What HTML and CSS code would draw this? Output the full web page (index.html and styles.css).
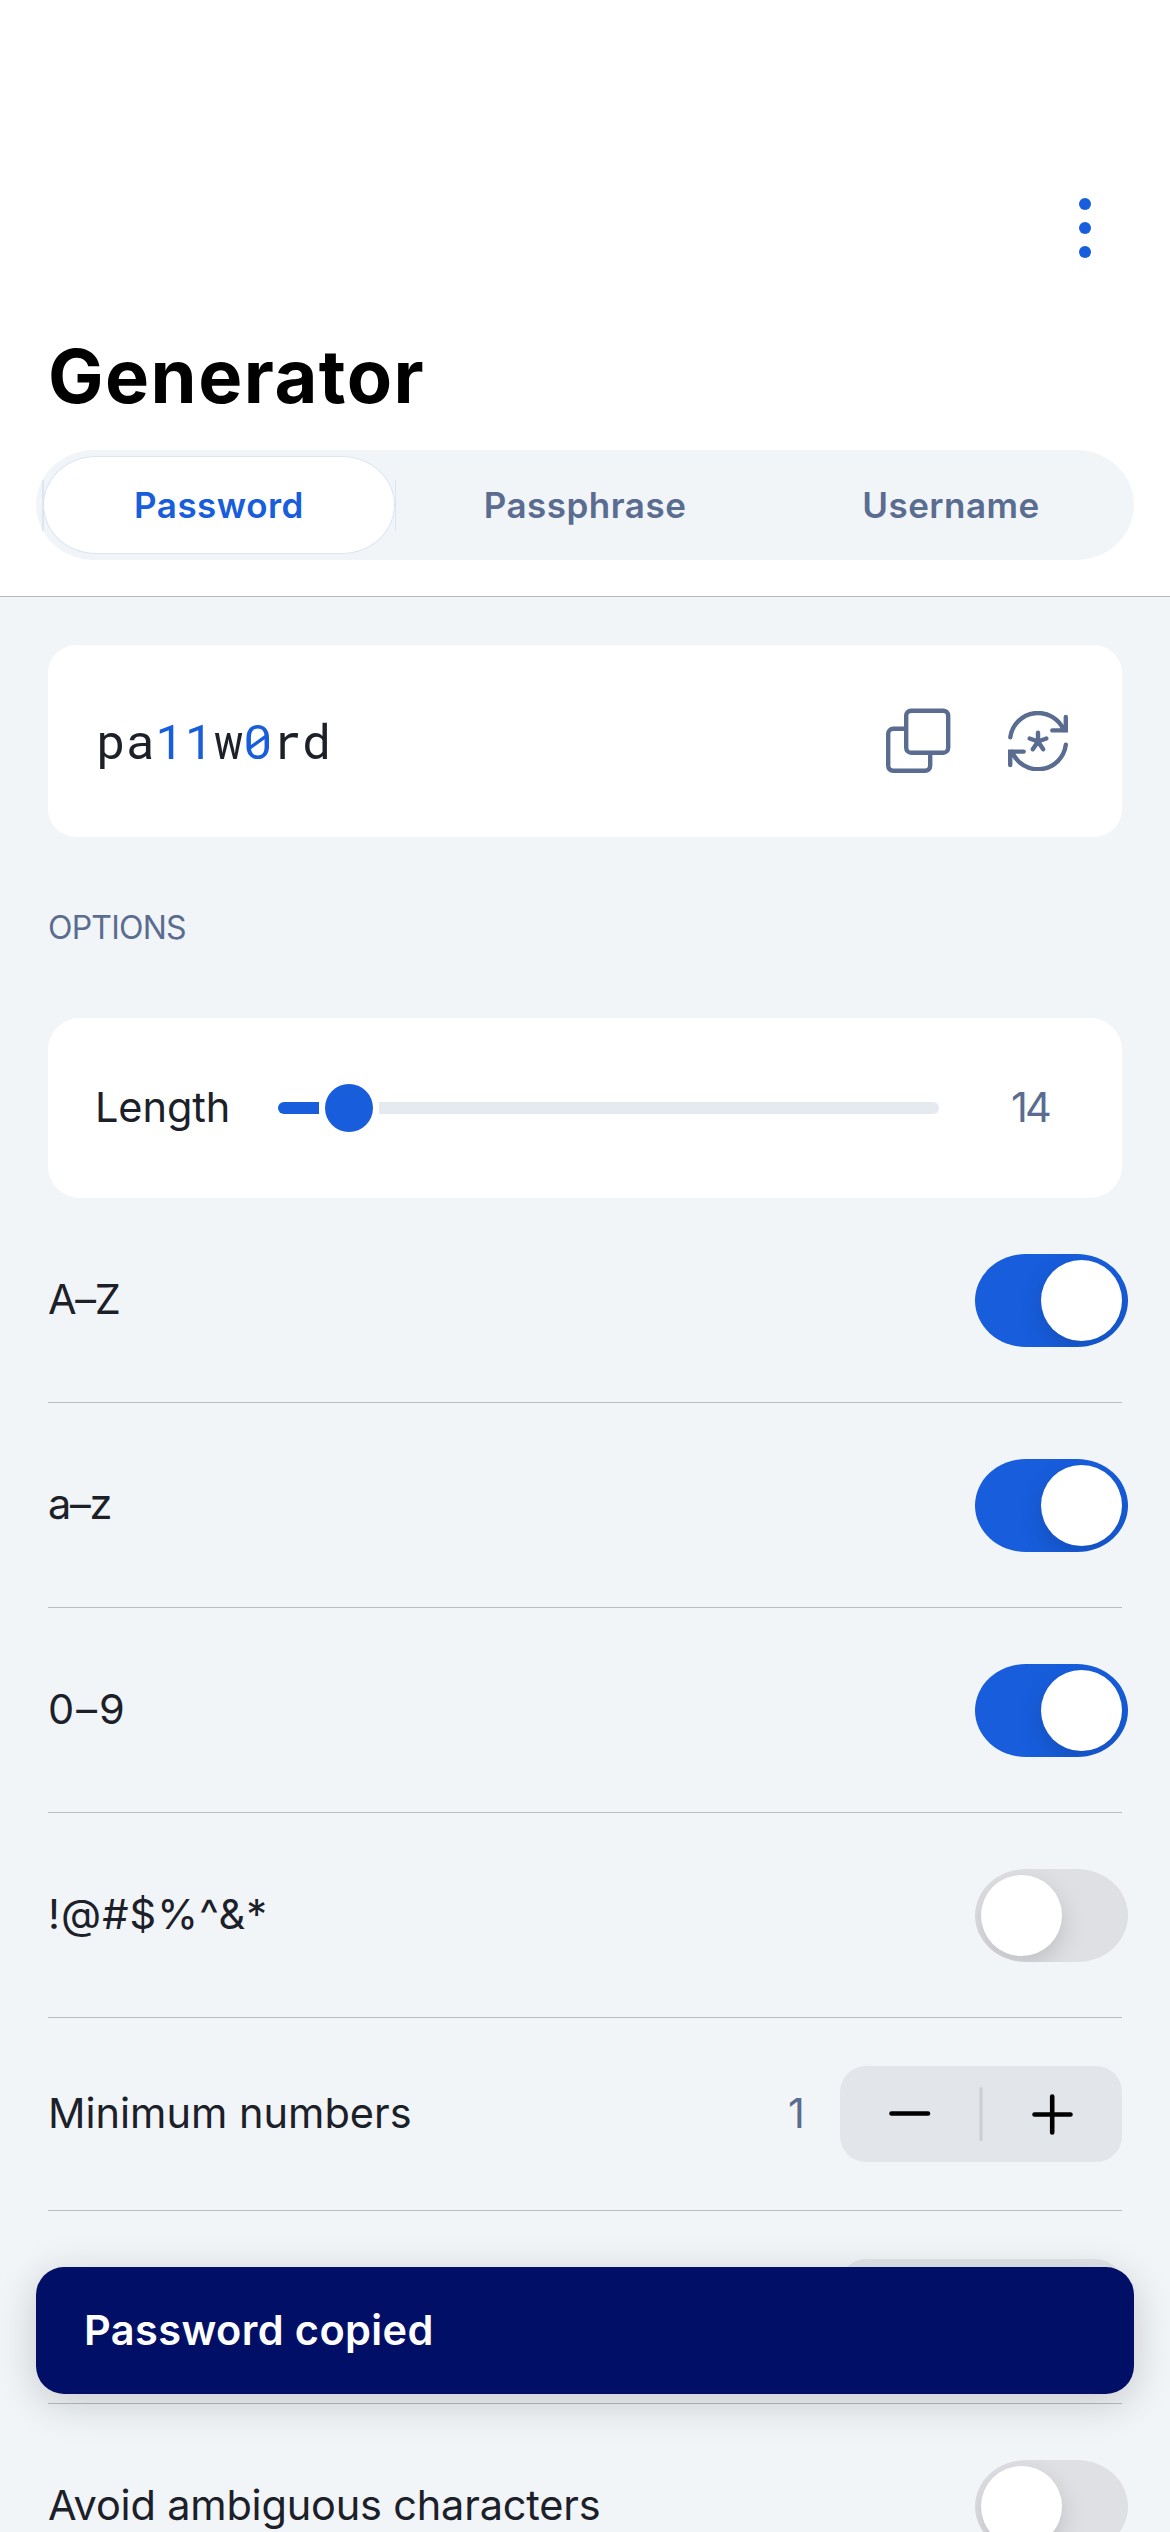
FILE: index.html
```html
<!DOCTYPE html>
<html lang="en">
<head>
<meta charset="utf-8">
<title>Generator</title>
<link rel="stylesheet" href="styles.css">
</head>
<body>
<div class="screen">
  <header class="header">
    <div class="nav">
      <svg class="more" viewBox="0 0 12 60" fill="currentColor"><circle cx="6" cy="6" r="6"/><circle cx="6" cy="30" r="6"/><circle cx="6" cy="54" r="6"/></svg>
    </div>
    <h1 class="title">Generator</h1>
    <div class="tabs">
      <div class="tab tab-active">Password</div>
      <div class="tab">Passphrase</div>
      <div class="tab tab-last">Username</div>
    </div>
  </header>
  <main class="content">
    <section class="card result">
      <div class="password">pa<span class="digit">11</span>w<span class="digit">0</span>rd</div>
      <svg class="copy" viewBox="0 0 66 66" fill="none" stroke="currentColor" stroke-width="4.4">
        <rect x="20.200" y="2.700" width="42" height="42" rx="5"/>
        <path d="M20 20.800H7.200a5 5 0 0 0-5 5v32a5 5 0 0 0 5 5h32a5 5 0 0 0 5-5V44.700"/>
      </svg>
      <svg class="refresh" viewBox="0 0 60 60" fill="none" stroke="currentColor" stroke-width="4.4" stroke-linecap="round" stroke-linejoin="miter">
        <path d="M2.300 26.300A28 28 0 0 1 56 19.500M57.800 6v13.400H44.300"/>
        <path d="M57.800 33.800A28 28 0 0 1 4 40.600M2.200 54V40.600h13.500"/>
        <path d="M30 30.500v-8.800M30 30.500l-8.400-3M30 30.500l8.400-3M30 30.500l-5.200 7.800M30 30.500l5.200 7.800"/>
      </svg>
    </section>
    <h2 class="section-title">OPTIONS</h2>
    <section class="card length">
      <div class="length-label">Length</div>
      <div class="slider">
        <div class="fill"></div>
        <div class="thumb"></div>
        <div class="track"></div>
      </div>
      <div class="length-value">14</div>
    </section>
    <div class="row"><span class="letters">A–Z</span><div class="toggle on"><div class="knob"></div></div></div>
    <div class="row"><span class="letters">a–z</span><div class="toggle on"><div class="knob"></div></div></div>
    <div class="row"><span class="numbers">0–9</span><div class="toggle on"><div class="knob"></div></div></div>
    <div class="row"><span class="symbols">!@#$%^&amp;*</span><div class="toggle"><div class="knob"></div></div></div>
    <div class="row row-stepper">
      <span>Minimum numbers</span>
      <span class="count">1</span>
      <svg class="stepper" viewBox="0 0 282 96">
        <path class="divider" d="M141 22.500v51"/>
        <path class="sign" d="M51.500 47.500h36.500M194.500 48.500h36M212.200 30.500v36"/>
      </svg>
    </div>
    <div class="row row-stepper row-end">
      <svg class="stepper" viewBox="0 0 282 96">
        <path class="divider" d="M141 22.500v51"/>
        <path class="sign" d="M51.500 47.500h36.500M194.500 48.500h36M212.200 30.500v36"/>
      </svg>
    </div>
    <div class="row"><span class="ambiguous">Avoid ambiguous characters</span><div class="toggle"><div class="knob"></div></div></div>
  </main>
  <div class="toast">Password copied</div>
</div>
</body>
</html>
```
FILE: styles.css
```css
* { box-sizing: border-box; }
body {
  margin: 0;
  background: #f2f5f8;
  color: #1b2029;
  font: 400 41.5px/1.2 Inter, "Open Sans", sans-serif;
}
.screen {
  position: relative;
  width: 1170px;
  height: 2532px;
  overflow: hidden;
}
.header {
  height: 597px;
  background: #fff;
  border-bottom: 1px solid #b5babf;
}
.nav {
  height: 330px;
  padding: 198px 79px 0 0;
  display: flex;
  justify-content: flex-end;
  align-items: flex-start;
}
.more { width: 12px; height: 60px; color: #175ddc; }
.title {
  margin: 0 48px;
  height: 120px;
  padding-top: 1px;
  font-size: 74px;
  line-height: 90px;
  font-weight: 700;
  letter-spacing: 1.5px;
  color: #000;
}
.tabs {
  margin: 0 36px;
  height: 110px;
  padding: 6px 7px;
  display: flex;
  border-radius: 58px / 55px;
  background: #f2f5f8;
  color: #5a6d91;
  font-size: 35px;
  font-weight: 600;
  letter-spacing: .5px;
}
.tab {
  position: relative;
  width: 380px;
  display: flex;
  align-items: center;
  justify-content: center;
}
.tab-last { width: 352px; }
.tab-active {
  width: 352px;
  color: #175ddc;
  background: #fff;
  border: 1px solid #dbe5f6;
  border-radius: 53px / 49px;
}
.tab-active::before,
.tab-active::after {
  content: "";
  position: absolute;
  top: 23px;
  width: 1.5px;
  height: 51px;
  background: #dbe5f6;
}
.tab-active::before { left: -2px; }
.tab-active::after { right: -2px; }
.content { padding: 48px 48px 0; }
.card { background: #fff; border-radius: 28px; }
.result {
  height: 192px;
  padding: 0 54px 0 48px;
  display: flex;
  align-items: center;
  color: #5a6d91;
}
.password {
  flex: 1;
  padding-bottom: 2px;
  color: #1b2029;
  font: 400 49px/60px "Roboto Mono", "Liberation Mono", monospace;
}
.digit { color: #175ddc; }
.copy { width: 66px; height: 66px; margin-right: 56px; }
.refresh { width: 60px; height: 60px; }
.section-title {
  margin: 71px 0 70px;
  font-size: 32px;
  line-height: 40px;
  font-weight: 400;
  letter-spacing: -.8px;
  color: #5a6d91;
}
.length {
  height: 180px;
  padding: 0 72px 0 48px;
  display: flex;
  align-items: center;
  border-radius: 32px;
}
.length-label { width: 182px; margin-left: -1px; margin-right: 1px; letter-spacing: -.1px; }
.slider { width: 661px; height: 48px; display: flex; align-items: center; }
.fill { width: 41px; height: 12px; background: #175ddc; border-radius: 6px 0 0 6px; }
.thumb { width: 48px; height: 48px; margin: 0 6px; border-radius: 50%; background: #175ddc; }
.track { flex: 1; height: 12px; background: #e5e9f0; border-radius: 0 6px 6px 0; }
.length-value { margin-left: 72px; color: #5a6d91; letter-spacing: -3px; }
.row {
  height: 205px;
  display: flex;
  align-items: center;
  justify-content: space-between;
  border-bottom: 1px solid #b8bdc3;
}
.row-stepper { height: 193px; }
.row-end { justify-content: flex-end; }
.letters { letter-spacing: -1.3px; }
.numbers { letter-spacing: 2px; }
.symbols { letter-spacing: 1.1px; }
.ambiguous { letter-spacing: -.2px; }
.toggle {
  width: 153px;
  height: 93px;
  margin-right: -6px;
  padding: 6px;
  display: flex;
  overflow: hidden;
  border-radius: 51px / 46.5px;
  background: #dfe0e4;
}
.on { justify-content: flex-end; background: #175ddc; }
.knob {
  width: 81px;
  height: 81px;
  border-radius: 50%;
  background: #fff;
  box-shadow: 0 9px 24px rgba(0, 0, 0, .15);
}
.count { margin-left: auto; margin-right: 35px; color: #5a6d91; }
.stepper {
  width: 282px;
  height: 96px;
  border-radius: 26px;
  background: #e2e5e9;
  fill: none;
  stroke-linecap: round;
}
.divider { stroke: #cbcdd1; stroke-width: 3; }
.sign { stroke: #000; stroke-width: 4.6; }
.toast {
  position: absolute;
  left: 36px;
  right: 36px;
  top: 2267px;
  height: 127px;
  padding: 0 48px;
  display: flex;
  align-items: center;
  border-radius: 28px;
  background: #020f66;
  color: #fff;
  font-weight: 600;
  letter-spacing: .4px;
  box-shadow: 0 9px 42px rgba(0, 0, 0, .18);
}
```
